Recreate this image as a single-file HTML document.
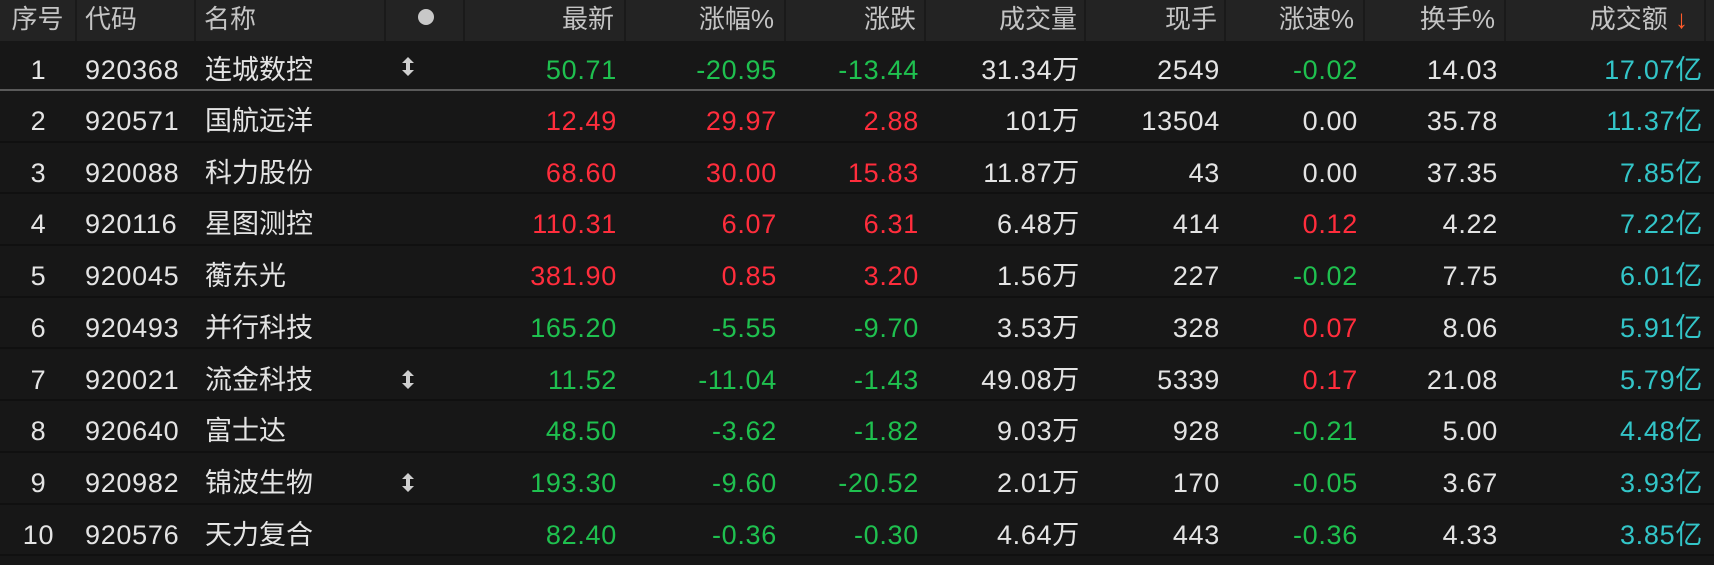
<!DOCTYPE html>
<html><head><meta charset="utf-8"><style>
html,body{margin:0;padding:0;background:#161616;width:1714px;height:556px;overflow:hidden}
body{font-family:"Liberation Sans","Noto Sans CJK SC",sans-serif;font-size:26px;color:#e4e4e4}
.hdr{position:absolute;left:0;top:0;width:1714px;height:41px;background:#232323;color:#c4c4c4}
.hdr div{position:absolute;top:0;height:41px;line-height:38px;box-sizing:border-box;border-right:2px solid #1a1a1a}
.row{position:absolute;left:0;width:1714px;border-bottom:2px solid #101010;box-sizing:border-box;background:#171717;font-size:27px}
.row div{position:absolute;top:0;letter-spacing:0.7px}
.r{text-align:right}
.g{color:#1fc04f}.d{color:#ff2d3c}.c{color:#33c5c8}
.arr{position:absolute;left:401px;width:14px;height:19px}
</style></head><body>
<div class="hdr">
<div style="left:0;width:77px;text-align:center">序号</div>
<div style="left:77px;width:119px;padding-left:8px">代码</div>
<div style="left:196px;width:190px;padding-left:8px">名称</div>
<div style="left:386px;width:79px"><span style="position:absolute;left:32px;top:9px;width:16px;height:16px;border-radius:50%;background:#c8c8c8"></span></div>
<div style="left:465px;width:161px;text-align:right;padding-right:10px">最新</div>
<div style="left:626px;width:160px;text-align:right;padding-right:10px">涨幅%</div>
<div style="left:786px;width:140px;text-align:right;padding-right:8px">涨跌</div>
<div style="left:926px;width:160px;text-align:right;padding-right:7px">成交量</div>
<div style="left:1086px;width:140px;text-align:right;padding-right:7px">现手</div>
<div style="left:1226px;width:139px;text-align:right;padding-right:9px">涨速%</div>
<div style="left:1365px;width:141px;text-align:right;padding-right:9px">换手%</div>
<div style="left:1506px;width:200px;text-align:right;padding-right:16px">成交额 <span style="color:#ff5a2a">↓</span></div>
</div>
<div id="rows"></div>
<script>
const D=[
["1","920368","连城数控",1,"50.71","-20.95","-13.44","31.34万","2549","-0.02","14.03","17.07亿","g","g","g","g"],
["2","920571","国航远洋",0,"12.49","29.97","2.88","101万","13504","0.00","35.78","11.37亿","d","d","d",""],
["3","920088","科力股份",0,"68.60","30.00","15.83","11.87万","43","0.00","37.35","7.85亿","d","d","d",""],
["4","920116","星图测控",0,"110.31","6.07","6.31","6.48万","414","0.12","4.22","7.22亿","d","d","d","d"],
["5","920045","蘅东光",0,"381.90","0.85","3.20","1.56万","227","-0.02","7.75","6.01亿","d","d","d","g"],
["6","920493","并行科技",0,"165.20","-5.55","-9.70","3.53万","328","0.07","8.06","5.91亿","g","g","g","d"],
["7","920021","流金科技",1,"11.52","-11.04","-1.43","49.08万","5339","0.17","21.08","5.79亿","g","g","g","d"],
["8","920640","富士达",0,"48.50","-3.62","-1.82","9.03万","928","-0.21","5.00","4.48亿","g","g","g","g"],
["9","920982","锦波生物",1,"193.30","-9.60","-20.52","2.01万","170","-0.05","3.67","3.93亿","g","g","g","g"],
["10","920576","天力复合",0,"82.40","-0.36","-0.30","4.64万","443","-0.36","4.33","3.85亿","g","g","g","g"]];
let h="";
D.forEach((r,i)=>{
 let top,ht,bb="";
 if(i==0){top=41;ht=50;bb="border-bottom:2px solid #5a5a5a;";}
 else{top=91+(i-1)*51.7;ht=51.7;}
 const lh=(i==0?58:60);
 h+=`<div class="row" style="top:${top}px;height:${ht}px;${bb}line-height:${lh}px">
 <div style="left:0;width:77px;text-align:center">${r[0]}</div>
 <div style="left:85px">${r[1]}</div>
 <div style="left:205px;letter-spacing:0">${r[2]}</div>
 ${r[3]?`<svg class="arr" style="top:${i==0?16:20}px" viewBox="0 0 14 19"><path d="M7 0L13 6H9V13H13L7 19L1 13H5V6H1Z" fill="#cfcfcf"/></svg>`:''}
 <div class="r ${r[12]}" style="right:${1714-617}px">${r[4]}</div>
 <div class="r ${r[13]}" style="right:${1714-777}px">${r[5]}</div>
 <div class="r ${r[14]}" style="right:${1714-919}px">${r[6]}</div>
 <div class="r" style="right:${1714-1080}px">${r[7]}</div>
 <div class="r" style="right:${1714-1220}px">${r[8]}</div>
 <div class="r ${r[15]}" style="right:${1714-1358}px">${r[9]}</div>
 <div class="r" style="right:${1714-1498}px">${r[10]}</div>
 <div class="r c" style="right:${1714-1703}px">${r[11]}</div>
 </div>`;
});
document.getElementById("rows").innerHTML=h;
</script>
</body></html>
